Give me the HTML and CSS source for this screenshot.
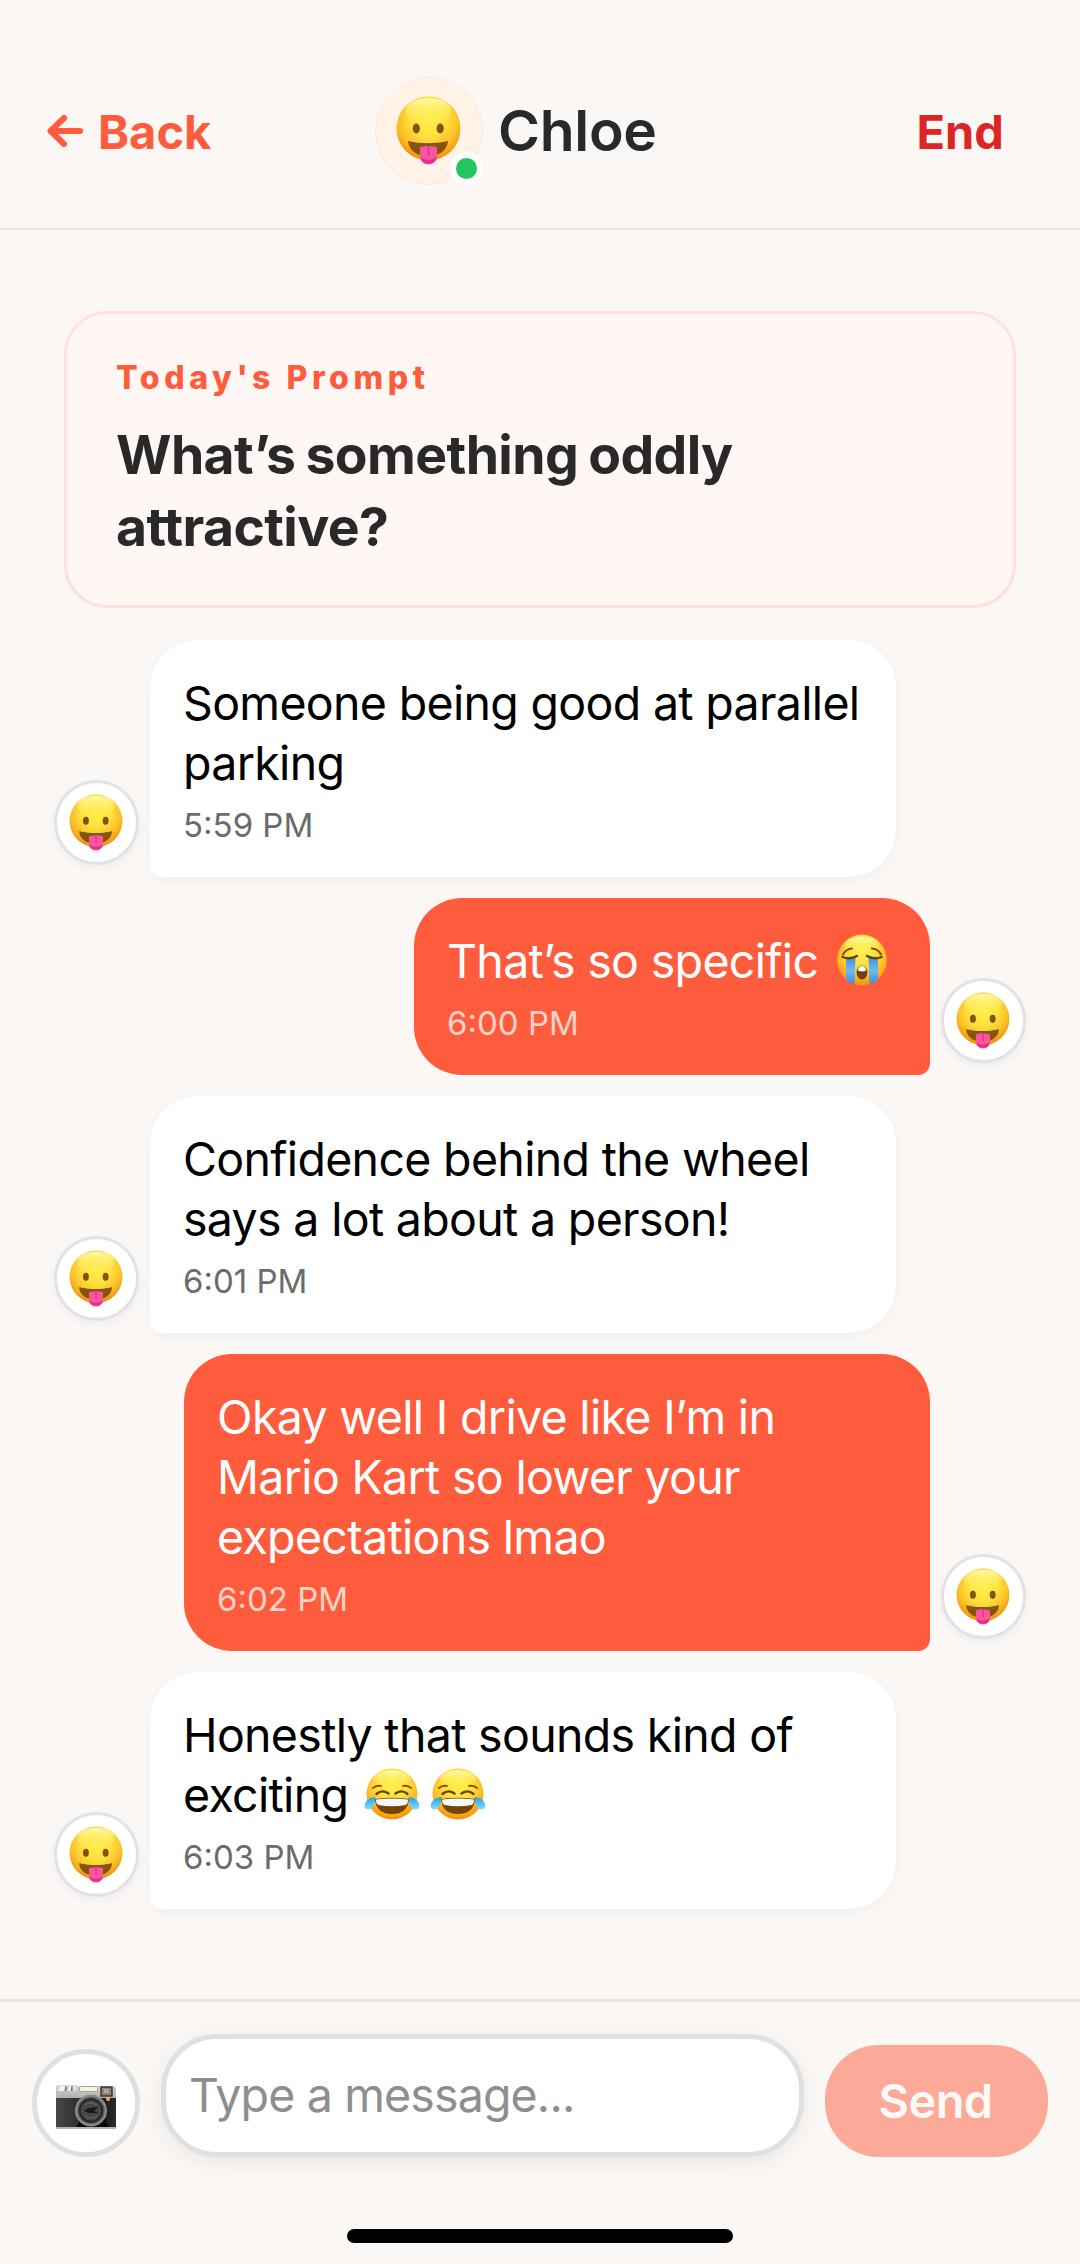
FILE: index.html
```html
<!DOCTYPE html>
<html lang="en">
<head>
<meta charset="utf-8">
<title>Chloe</title>
<link rel="stylesheet" href="styles.css">
</head>
<body>
<svg class="sprite" width="0" height="0" aria-hidden="true">
  <defs>
    <radialGradient id="face-fill" cx="50%" cy="35%" r="68%">
      <stop offset="0" stop-color="#fff04e"/>
      <stop offset=".42" stop-color="#ffe03c"/>
      <stop offset=".7" stop-color="#fdbd27"/>
      <stop offset="1" stop-color="#ee8706"/>
    </radialGradient>
    <linearGradient id="shine-fill" x1="0" y1="0" x2="0" y2="1">
      <stop offset="0" stop-color="#fffbb0" stop-opacity=".95"/>
      <stop offset="1" stop-color="#fff04e" stop-opacity="0"/>
    </linearGradient>
    <linearGradient id="tear-fill" x1="0" y1="0" x2="0" y2="1">
      <stop offset="0" stop-color="#3f93dc"/>
      <stop offset=".5" stop-color="#6db9f5"/>
      <stop offset="1" stop-color="#3c8edb"/>
    </linearGradient>
    <linearGradient id="drop-fill" x1="0" y1="0" x2="0" y2="1">
      <stop offset="0" stop-color="#2a9be8"/>
      <stop offset="1" stop-color="#7fe0ff"/>
    </linearGradient>
    <linearGradient id="body-fill" x1="0" y1="0" x2="1" y2="0">
      <stop offset="0" stop-color="#474747"/>
      <stop offset=".75" stop-color="#161616"/>
      <stop offset="1" stop-color="#2c2c2c"/>
    </linearGradient>
    <linearGradient id="top-fill" x1="0" y1="0" x2="0" y2="1">
      <stop offset="0" stop-color="#d6d6d4"/>
      <stop offset="1" stop-color="#adadad"/>
    </linearGradient>
    <symbol id="tongue" viewBox="0 0 65 69">
      <circle cx="32.500" cy="32.500" r="32" fill="url(#face-fill)"/>
      <ellipse cx="32.500" cy="15" rx="23" ry="13" fill="url(#shine-fill)"/>
      <ellipse cx="20.300" cy="32.500" rx="3.600" ry="4.900" fill="#84520b"/>
      <ellipse cx="44.200" cy="32.500" rx="3.600" ry="4.900" fill="#84520b"/>
      <path d="M12 45C24 48 40 48 52 45C51 55 43 60 32 60S13 55 12 45Z" fill="#8a5207"/>
      <path d="M14 45.700C26 48.500 38 48.500 50 45.700L48.500 48.800C38 51 26 51 15.500 48.800Z" fill="#7b5a25"/>
      <path d="M24 51Q32.500 49 41 51V60.500A8.500 8 0 0 1 24 60.500Z" fill="#f9569f"/>
      <path d="M24.300 61Q32.500 67 40.700 61A8.300 7.800 0 0 1 24.300 61Z" fill="#df2f86"/>
      <path d="M32.500 51V59" stroke="#d62f80" stroke-width="1.300" stroke-linecap="round"/>
    </symbol>
    <symbol id="sob" viewBox="0 0 56 52">
      <ellipse cx="28" cy="26" rx="24.700" ry="25.500" fill="url(#face-fill)"/>
      <ellipse cx="28" cy="11" rx="17" ry="9" fill="url(#shine-fill)"/>
      <path d="M9 20.500Q12 15 18 14.500M47 20.500Q44 15 38 14.500" fill="none" stroke="#82500d" stroke-width="2" stroke-linecap="round"/>
      <path d="M12 23Q18 25 21.500 23.500L20.500 50Q16 49 12 46ZM44 23Q38 25 34.500 23.500L35.500 50Q40 49 44 46Z" fill="url(#tear-fill)"/>
      <path d="M8.500 23Q16 26 23 22M47.500 23Q40 26 33 22" fill="none" stroke="#69400e" stroke-width="2.400" stroke-linecap="round"/>
      <ellipse cx="28" cy="38.500" rx="5.400" ry="7" fill="#754008"/>
      <path d="M23.800 36.500Q24.500 32 28 32T32.200 36.500Q28 38.500 23.800 36.500Z" fill="#fff"/>
    </symbol>
    <symbol id="joy" viewBox="0 0 56 52">
      <circle cx="28" cy="26" r="25.500" fill="url(#face-fill)"/>
      <ellipse cx="28" cy="11" rx="18" ry="9" fill="url(#shine-fill)"/>
      <path d="M9 20Q12 17 17 18M47 20Q44 17 39 18" fill="none" stroke="#8a520b" stroke-width="1.800" stroke-linecap="round"/>
      <path d="M12.500 26Q18 21 24.500 25.500M31.500 25.500Q38 21 43.500 26" fill="none" stroke="#6d3f08" stroke-width="2.400" stroke-linecap="round"/>
      <path d="M11 31Q28 28.500 45 31C44.500 40 39 46 28 46S11.500 40 11 31Z" fill="#794207"/>
      <path d="M12 31.500Q28 29.500 44 31.500Q44 36 41.500 37Q28 39.500 14.500 37Q12 36 12 31.500Z" fill="#f4f6f8"/>
      <path d="M11.500 29C5 29 1 33.500 .7 37.500C.5 42 6.500 43 9 39Q11 35 11.500 29ZM44.500 29C51 29 55 33.500 55.300 37.500C55.500 42 49.500 43 47 39Q45 35 44.500 29Z" fill="url(#drop-fill)"/>
    </symbol>
    <symbol id="camera" viewBox="0 0 60 44">
      <path d="M0 2Q0 0 2 0H19L21 1H58Q60 1 60 3V14H0Z" fill="url(#top-fill)"/>
      <path d="M2 6L4 1H9L8 6ZM12 6L13 1H15L14.500 6ZM17 1H18.500L20.500 6H19Z" fill="#f1f1f1"/>
      <path d="M10 1.500L9.500 6M16 1.500L15.500 6" stroke="#777" stroke-width="1.400"/>
      <rect x="0" y="13" width="60" height="30" fill="url(#body-fill)"/>
      <path d="M20 43L24 35L49 34L53 43Z" fill="#080808"/>
      <rect x="0" y="42" width="60" height="2" fill="#b5b5b5"/>
      <rect x="23.500" y="1.500" width="18" height="5" rx="1" fill="#f5f2df" stroke="#989790" stroke-width=".8"/>
      <rect x="45" y="2" width="11" height="9" fill="#8e8177" stroke="#34302f" stroke-width="1.400"/>
      <path d="M48 4H53V8H48Z" fill="#b6a69a"/>
      <circle cx="35" cy="25.500" r="16" fill="#8b8b8b"/>
      <circle cx="35" cy="25.500" r="13.700" fill="#5d5d5d"/>
      <circle cx="35" cy="25.500" r="12.300" fill="#292929"/>
      <circle cx="35" cy="25.500" r="9.600" fill="#464646" stroke="#5c5c5c" stroke-width=".7"/>
      <path d="M28 26L33 23L42 22L38 26L43 28L33 28Z" fill="#171717"/>
      <path d="M29 20Q34 16 41 20M29 31Q35 35 41 31" fill="none" stroke="#6d6d6d" stroke-width="1"/>
      <circle cx="52" cy="14" r="2" fill="#f4b73b"/>
    </symbol>
  </defs>
</svg>

<div class="screen">
  <header class="header">
    <a class="back">
      <svg class="back-arrow" viewBox="0 0 36 32"><path d="M17 3L3.500 16L17 29M4 16H33" fill="none" stroke="currentColor" stroke-width="6" stroke-linecap="round" stroke-linejoin="round"/></svg>
      <span>Back</span>
    </a>
    <div class="profile">
      <div class="profile-avatar">
        <svg class="profile-face"><use href="#tongue"/></svg>
        <span class="online"></span>
      </div>
      <h1 class="name">Chloe</h1>
    </div>
    <a class="end">End</a>
  </header>

  <main class="chat">
    <section class="prompt">
      <p class="prompt-label">Today's Prompt</p>
      <h2 class="prompt-text">What’s something oddly<br>attractive?</h2>
    </section>

    <div class="message">
      <div class="avatar"><svg class="avatar-face"><use href="#tongue"/></svg></div>
      <div class="bubble">
        <p class="text">Someone being good at parallel<br>parking</p>
        <time class="time">5:59 PM</time>
      </div>
    </div>
    <div class="message mine">
      <div class="avatar"><svg class="avatar-face"><use href="#tongue"/></svg></div>
      <div class="bubble short">
        <p class="text">That’s so specific <svg class="emoji"><use href="#sob"/></svg></p>
        <time class="time">6:00 PM</time>
      </div>
    </div>
    <div class="message">
      <div class="avatar"><svg class="avatar-face"><use href="#tongue"/></svg></div>
      <div class="bubble">
        <p class="text">Confidence behind the wheel<br>says a lot about a person!</p>
        <time class="time">6:01 PM</time>
      </div>
    </div>
    <div class="message mine">
      <div class="avatar"><svg class="avatar-face"><use href="#tongue"/></svg></div>
      <div class="bubble">
        <p class="text">Okay well I drive like I’m in<br>Mario Kart so lower your<br>expectations lmao</p>
        <time class="time">6:02 PM</time>
      </div>
    </div>
    <div class="message">
      <div class="avatar"><svg class="avatar-face"><use href="#tongue"/></svg></div>
      <div class="bubble">
        <p class="text">Honestly that sounds kind of<br>exciting <svg class="emoji"><use href="#joy"/></svg><svg class="emoji"><use href="#joy"/></svg></p>
        <time class="time">6:03 PM</time>
      </div>
    </div>
  </main>

  <footer class="composer">
    <div class="composer-row">
      <div class="camera"><svg class="camera-icon"><use href="#camera"/></svg></div>
      <div class="field">Type a message...</div>
      <div class="send">Send</div>
    </div>
    <div class="home-bar"></div>
  </footer>
</div>
</body>
</html>
```
FILE: styles.css
```css
* {
  box-sizing: border-box;
}

body {
  margin: 0;
  background: #fbf7f4;
  font-family: "Inter", "Liberation Sans", sans-serif;
}

.sprite {
  position: absolute;
}

p, h1, h2 {
  margin: 0;
}

.screen {
  display: flex;
  flex-direction: column;
  width: 1080px;
  height: 2264px;
  overflow: hidden;
}

/* Header */

.header {
  display: flex;
  align-items: center;
  height: 230px;
  padding: 33px 76px 0 47px;
  border-bottom: 2px solid #ece8e5;
}

.back {
  display: flex;
  align-items: center;
  gap: 15px;
  width: 328px;
  padding-top: 1px;
  color: #ff5c3d;
  font-size: 47px;
  font-weight: 700;
  letter-spacing: 0;
}

.back-arrow {
  width: 36px;
  height: 32px;
}

.profile {
  display: flex;
  align-items: center;
  gap: 15px;
}

.profile-avatar {
  position: relative;
  display: flex;
  align-items: center;
  justify-content: center;
  width: 108px;
  height: 108px;
  padding-right: 2px;
  border: 1px solid #fbe8da;
  border-radius: 50%;
  background: #fff3e8;
}

.profile-face {
  width: 65px;
  height: 69px;
}

.online {
  position: absolute;
  right: -1px;
  bottom: -1px;
  width: 33px;
  height: 33px;
  border: 6px solid #fff;
  border-radius: 50%;
  background: #22c55e;
}

.name {
  color: #292929;
  font-size: 57px;
  font-weight: 600;
  letter-spacing: -0.3px;
}

.end {
  margin-left: auto;
  padding-top: 1px;
  color: #dc2626;
  font-size: 47px;
  font-weight: 700;
}

/* Conversation */

.chat {
  display: flex;
  flex: 1;
  flex-direction: column;
  gap: 21px;
  padding: 81px 54px 0;
}

.prompt {
  height: 297px;
  margin: 0 10px 11px;
  padding: 44px 49px 0;
  border: 3px solid #fde2dc;
  border-radius: 43px;
  background: #fff7f4;
}

.prompt-label {
  color: #ff5c3d;
  font-size: 32px;
  font-weight: 800;
  line-height: 40px;
  letter-spacing: 4.6px;
}

.prompt-text {
  margin-top: 21px;
  color: #292929;
  font-size: 53.5px;
  font-weight: 700;
  line-height: 72px;
  letter-spacing: -0.6px;
  word-spacing: -2px;
}

.message {
  display: flex;
  align-items: flex-end;
  gap: 11px;
}

.message.mine {
  flex-direction: row-reverse;
}

.avatar {
  display: flex;
  flex: none;
  align-items: center;
  justify-content: center;
  width: 85px;
  height: 85px;
  margin-bottom: 12px;
  padding-right: 2px;
  border: 3px solid #e2e2e4;
  border-radius: 50%;
  background: #fff;
  box-shadow: 0 3px 8px rgba(0, 0, 0, 0.05);
}

.avatar-face {
  width: 54px;
  height: 57px;
}

.bubble {
  width: 746px;
  padding: 33px 33px 32px;
  border-radius: 48px 48px 48px 12px;
  background: #fff;
  box-shadow: 0 3px 12px rgba(0, 0, 0, 0.04);
}

.mine .bubble {
  border-radius: 48px 48px 12px 48px;
  background: #ff5c3d;
  box-shadow: none;
  color: #fff;
}

.bubble.short {
  width: 516px;
}

.text {
  font-size: 46.5px;
  line-height: 60px;
  letter-spacing: -0.68px;
  white-space: nowrap;
}

.emoji {
  width: 56px;
  height: 52px;
  margin: 0 7px 0 3px;
  vertical-align: -8px;
}

.time {
  display: block;
  margin-top: 12px;
  color: #6b6b6b;
  font-size: 33px;
  line-height: 40px;
}

.mine .time {
  color: #ffd2c8;
}

/* Composer */

.composer {
  height: 265px;
  border-top: 3px solid #ebe7e4;
}

.composer-row {
  display: flex;
  align-items: flex-end;
  gap: 21px;
  height: 155px;
  padding: 0 32px;
}

.camera {
  display: flex;
  align-items: center;
  justify-content: center;
  width: 108px;
  height: 108px;
  padding-top: 7px;
  border: 5px solid #e0e0e0;
  border-radius: 50%;
  background: #fff;
}

.camera-icon {
  width: 60px;
  height: 44px;
}

.field {
  flex: 1;
  height: 123px;
  padding: 28px 23px;
  border: 5px solid #e0e0e0;
  border-radius: 56px;
  background: #fff;
  box-shadow: 0 5px 22px rgba(0, 0, 0, 0.07);
  color: #8e8e8e;
  font-size: 46.5px;
  line-height: 56px;
  letter-spacing: -0.85px;
}

.send {
  width: 223px;
  height: 112px;
  padding-right: 2px;
  border-radius: 54px;
  background: #fda997;
  color: #fffaf8;
  font-size: 47px;
  font-weight: 600;
  line-height: 112px;
  letter-spacing: -0.6px;
  text-align: center;
}

.home-bar {
  width: 386px;
  height: 14px;
  margin: 72px auto 0;
  border-radius: 8px;
  background: #000;
}
```
